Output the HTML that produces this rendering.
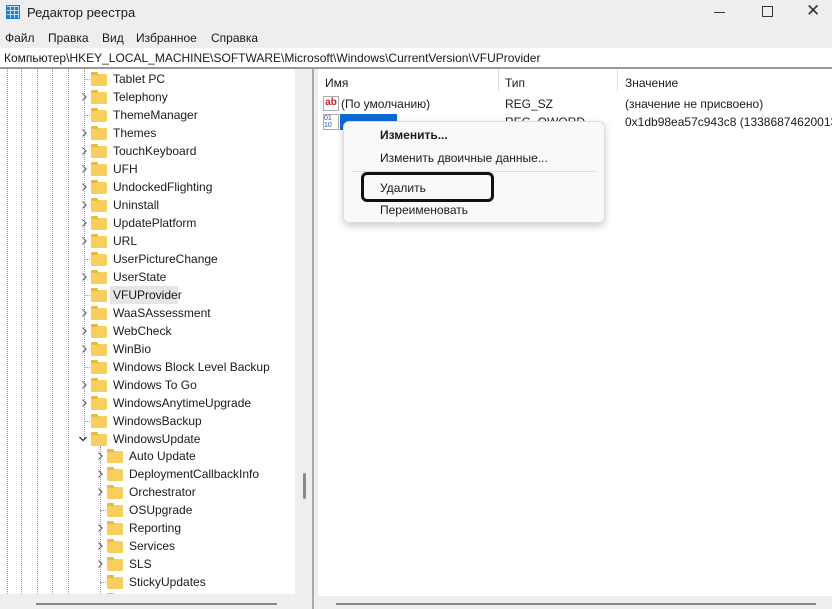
<!DOCTYPE html><html><head><meta charset="utf-8"><style>
body{margin:0;width:832px;height:609px;overflow:hidden;background:#eeeeee;font-family:"Liberation Sans",sans-serif;font-size:12px;color:#1a1a1a;position:relative}
.a{position:absolute;white-space:nowrap}
.f{position:absolute;width:16px;height:12px;background:#f8cf5c;border-radius:1px}
.f:before{content:"";position:absolute;left:0;top:-2px;width:7px;height:3px;background:#e9b940;border-radius:1px 1px 0 0}
.ch{position:absolute;width:8px;height:8px}
.dl{position:absolute;border-left:1px dotted #999}
.dh{position:absolute;border-top:1px dotted #999;width:8px}
</style></head><body>
<div class="a" style="left:6px;top:5px;width:14px;height:14px;background:#1f7bd6;"></div>
<div class="a" style="left:7px;top:6px;width:12px;height:12px;background:repeating-linear-gradient(90deg,transparent 0 3px,#bde 3px 4px),repeating-linear-gradient(0deg,transparent 0 3px,#bde 3px 4px)"></div>
<div class="a" style="left:27px;top:5px;font-size:13px">Редактор реестра</div>
<div class="a" style="left:714px;top:12px;width:11px;border-top:1px solid #333"></div>
<div class="a" style="left:762px;top:6px;width:9px;height:9px;border:1px solid #333"></div>
<div class="a" style="left:806px;top:1px;font-size:17px;color:#333">✕</div>
<div class="a" style="left:5px;top:31px">Файл</div><div class="a" style="left:48px;top:31px">Правка</div><div class="a" style="left:102px;top:31px">Вид</div><div class="a" style="left:136px;top:31px">Избранное</div><div class="a" style="left:211px;top:31px">Справка</div>
<div class="a" style="left:0;top:48px;width:832px;height:19px;background:#fff;border-bottom:2px solid #999"></div>
<div class="a" style="left:4px;top:51px">Компьютер\HKEY_LOCAL_MACHINE\SOFTWARE\Microsoft\Windows\CurrentVersion\VFUProvider</div>
<div class="a" style="left:0;top:69px;width:295px;height:525px;background:#fff"></div>
<div class="a" style="left:303px;top:473px;width:3px;height:26px;background:#888;border-radius:2px"></div>
<div class="a" style="left:312px;top:69px;width:2px;height:540px;background:#aaa"></div>
<div class="a" style="left:318px;top:69px;width:514px;height:527px;background:#fff"></div>
<div class="dl" style="left:7px;top:69px;height:525px"></div><div class="dl" style="left:21px;top:69px;height:525px"></div><div class="dl" style="left:37px;top:69px;height:525px"></div><div class="dl" style="left:52px;top:69px;height:525px"></div><div class="dl" style="left:68px;top:69px;height:525px"></div>
<div class="dl" style="left:84px;top:69px;height:369px"></div>
<div class="dl" style="left:100px;top:446px;height:148px"></div>
<div id="t"></div>
<div class="a" style="left:0;top:594px;width:295px;height:15px;background:#eeeeee"></div>
<div class="a" style="left:36px;top:603px;width:241px;height:2px;background:#888"></div>
<div class="a" style="left:336px;top:603px;width:480px;height:2px;background:#888"></div>
<div class="a" style="left:498px;top:69px;width:1px;height:22px;background:#ddd"></div><div class="a" style="left:617px;top:69px;width:1px;height:22px;background:#ddd"></div>
<div class="a" style="left:325px;top:76px">Имя</div><div class="a" style="left:505px;top:76px">Тип</div><div class="a" style="left:625px;top:76px">Значение</div>
<div class="a" style="left:323px;top:96px;width:14px;height:13px;border:1px solid #aaa;font-size:10px;color:#c22;font-weight:bold;line-height:12px;text-align:center">ab</div>
<div class="a" style="left:341px;top:97px">(По умолчанию)</div><div class="a" style="left:505px;top:97px">REG_SZ</div><div class="a" style="left:625px;top:97px">(значение не присвоено)</div>
<div class="a" style="left:323px;top:114px;width:14px;height:14px;border:1px solid #aaa;font-size:7px;color:#1c4fa8;line-height:7px">01<br>10</div>
<div class="a" style="left:340px;top:114px;width:57px;height:16px;background:#0b69d6"></div>
<div class="a" style="left:505px;top:115px">REG_QWORD</div><div class="a" style="left:625px;top:115px">0x1db98ea57c943c8 (133868746200138696)</div>
<div class="a" style="left:343px;top:121px;width:260px;height:100px;background:#f9f9f9;border:1px solid #ddd;border-radius:6px;box-shadow:0 3px 8px rgba(0,0,0,.2)"></div>
<div class="a" style="left:380px;top:128px;font-weight:bold">Изменить...</div>
<div class="a" style="left:380px;top:151px">Изменить двоичные данные...</div>
<div class="a" style="left:351px;top:171px;width:244px;height:1px;background:#ddd"></div>
<div class="a" style="left:361px;top:172px;width:127px;height:24px;border:3px solid #111;border-radius:6px"></div>
<div class="a" style="left:380px;top:181px">Удалить</div>
<div class="a" style="left:380px;top:203px">Переименовать</div>
<script>
var L1=[["Tablet PC",0],["Telephony",1],["ThemeManager",0],["Themes",1],["TouchKeyboard",1],["UFH",1],["UndockedFlighting",1],["Uninstall",1],["UpdatePlatform",1],["URL",1],["UserPictureChange",0],["UserState",1],["VFUProvider",0],["WaaSAssessment",1],["WebCheck",1],["WinBio",1],["Windows Block Level Backup",0],["Windows To Go",1],["WindowsAnytimeUpgrade",1],["WindowsBackup",0],["WindowsUpdate",2]];
var L2=[["Auto Update",1],["DeploymentCallbackInfo",1],["Orchestrator",1],["OSUpgrade",0],["Reporting",1],["Services",1],["SLS",1],["StickyUpdates",0],["",0]];
var h="";
function row(n,c,y,x,sel){
 if(c==1)h+='<svg class="ch" style="left:'+(x-4)+'px;top:'+(y-4)+'px" viewBox="0 0 8 8"><path d="M2.5 0.5 L6 4 L2.5 7.5" fill="none" stroke="#666" stroke-width="1.2"/></svg>';
 else if(c==2)h+='<svg class="ch" style="left:'+(x-5)+'px;top:'+(y-4)+'px" viewBox="0 0 8 8"><path d="M0.5 2 L4 5.5 L7.5 2" fill="none" stroke="#333" stroke-width="1.3"/></svg>';
 else h+='<div class="dh" style="left:'+x+'px;top:'+y+'px"></div>';
 if(sel)h+='<div class="a" style="left:'+(x+26)+'px;top:'+(y-9)+'px;width:68px;height:18px;background:#e5e5e5"></div>';
 h+='<div class="f" style="left:'+(x+7)+'px;top:'+(y-5)+'px"></div>';
 h+='<div class="a" style="left:'+(x+29)+'px;top:'+(y-7)+'px">'+n+'</div>';
}
L1.forEach(function(r,i){row(r[0],r[1],79+18*i,84,r[0]=="VFUProvider");});
L2.forEach(function(r,i){row(r[0],r[1],456+18*i,100,false);});
document.getElementById("t").innerHTML=h;
</script>
</body></html>
